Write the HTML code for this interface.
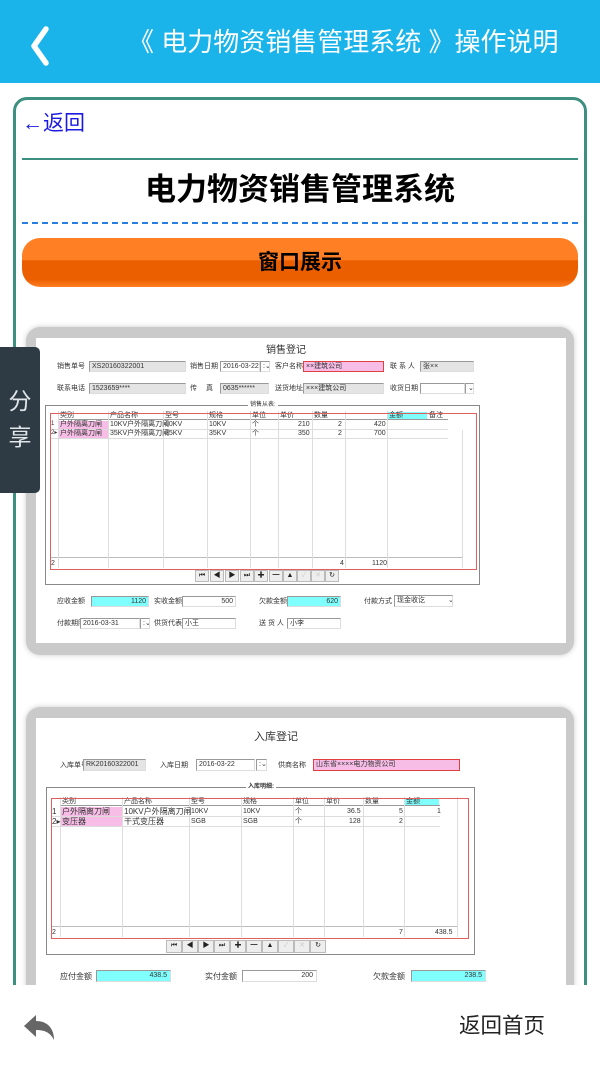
<!DOCTYPE html>
<html><head><meta charset="utf-8">
<style>
*{margin:0;padding:0;box-sizing:border-box}
body{width:600px;height:1067px;position:relative;overflow:hidden;background:#fff;font-family:"Liberation Sans","Noto Sans CJK SC",sans-serif}
.a{position:absolute}
.t{position:absolute;font-size:7px;color:#333;white-space:nowrap;line-height:9px}
.in{position:absolute;border:1px solid #999;border-right-color:#ddd;border-bottom-color:#ddd;background:#e4e4e4;font-size:7px;line-height:9px;color:#333;padding-left:2px;white-space:nowrap;overflow:hidden}
.w{background:#fff}.p{background:#f7bde6;border:1px solid #e04040}.c{background:#80ffff}
.vl{position:absolute;width:1px;background:#ddd}
.hl{position:absolute;height:1px;background:#ddd}
.rd{position:absolute;border:1px solid #e06060}
.nb{position:absolute;width:14px;height:12px;background:#eee;border:1px solid #bbb;font-size:7px;text-align:center;line-height:10px;color:#222}
</style></head><body>
<div class="a" style="left:0;top:0;width:600px;height:83px;background:#1bb4ea"></div>
<svg class="a" style="left:27px;top:25px" width="24" height="44"><path d="M19 4 L7 21 L19 38" stroke="#fff" stroke-width="5.5" fill="none" stroke-linecap="round" stroke-linejoin="round"/></svg>
<div class="a" style="left:128px;top:24px;font-size:26px;color:#fff;white-space:nowrap;line-height:36px">《 电力物资销售管理系统 》操作说明</div>

<div class="a" style="left:13px;top:97px;width:574px;height:920px;border:3px solid #3d8f80;border-radius:14px"></div>
<div class="a" style="left:22px;top:110px;font-size:21px;color:#1a1ae0;line-height:28px">←返回</div>
<div class="a" style="left:22px;top:158px;width:556px;height:2px;background:#3d8f80"></div>
<div class="a" style="left:0;top:170px;width:600px;text-align:center;font-size:31px;font-weight:bold;color:#000;line-height:40px">电力物资销售管理系统</div>
<div class="a" style="left:22px;top:222px;width:556px;border-top:2px dashed #2a7ee0"></div>
<div class="a" style="left:22px;top:238px;width:556px;height:49px;border-radius:18px;background:linear-gradient(#ff7f24 0%,#ff7f24 45%,#ec5f00 46%,#ec5f00 85%,#ff7f24 100%);text-align:center;font-size:21px;font-weight:bold;line-height:50px;color:#000">窗口展示</div>

<!-- screenshot 1 -->
<div class="a" style="left:26px;top:327px;width:548px;height:328px;background:#cacaca;border-radius:14px;box-shadow:0 0 6px #ccc"></div>
<div class="a" style="left:36px;top:338px;width:530px;height:305px;background:#fff"></div>
<div class="t" style="left:266px;top:345px;font-size:10px;line-height:12px">销售登记</div>
<div class="t" style="left:57px;top:362px">销售单号</div><div class="in" style="left:89px;top:361px;width:97px;height:11px">XS20160322001</div>
<div class="t" style="left:190px;top:362px">销售日期</div><div class="in w" style="left:220px;top:361px;width:40px;height:11px">2016-03-22</div><div class="in w" style="left:260px;top:361px;width:10px;height:11px">:⌄</div>
<div class="t" style="left:275px;top:362px">客户名称</div><div class="in p" style="left:303px;top:361px;width:81px;height:11px">××建筑公司</div>
<div class="t" style="left:390px;top:362px">联 系 人</div><div class="in" style="left:420px;top:361px;width:54px;height:11px">张××</div>
<div class="t" style="left:57px;top:384px">联系电话</div><div class="in" style="left:89px;top:383px;width:97px;height:11px">1523659****</div>
<div class="t" style="left:190px;top:384px">传　 真</div><div class="in" style="left:220px;top:383px;width:49px;height:11px">0635******</div>
<div class="t" style="left:275px;top:384px">送货地址</div><div class="in" style="left:303px;top:383px;width:81px;height:11px">×××建筑公司</div>
<div class="t" style="left:390px;top:384px">收货日期</div><div class="in w" style="left:420px;top:383px;width:45px;height:11px"></div><div class="in w" style="left:465px;top:383px;width:9px;height:11px">⌄</div>
<div class="a" style="left:45px;top:405px;width:435px;height:180px;border:1px solid #888"></div>
<div class="t" style="left:248px;top:401px;background:#fff;font-size:6px;padding:0 2px">销售从表:</div>
<div class="a" style="left:58px;top:411px;width:390px;height:9px;border-bottom:1px solid #999"></div>
<div class="a" style="left:59px;top:421px;width:49px;height:17px;background:#f7bde6"></div>
<div class="a" style="left:387px;top:412px;width:40px;height:7px;background:#80ffff"></div>
<div class="hl" style="left:50px;top:429px;width:398px"></div><div class="hl" style="left:50px;top:438px;width:398px"></div>
<div class="hl" style="left:50px;top:557px;width:412px;background:#bbb"></div>
<div class="vl" style="left:58px;top:411px;height:157px"></div>
<div class="vl" style="left:108px;top:411px;height:157px"></div>
<div class="vl" style="left:163px;top:411px;height:157px"></div>
<div class="vl" style="left:207px;top:411px;height:157px"></div>
<div class="vl" style="left:250px;top:411px;height:157px"></div>
<div class="vl" style="left:278px;top:411px;height:157px"></div>
<div class="vl" style="left:312px;top:411px;height:157px"></div>
<div class="vl" style="left:345px;top:411px;height:157px"></div>
<div class="vl" style="left:387px;top:411px;height:157px"></div>
<div class="vl" style="left:462px;top:430px;height:138px"></div>
<div class="t" style="left:60px;top:411px">类别</div><div class="t" style="left:110px;top:411px">产品名称</div><div class="t" style="left:165px;top:411px">型号</div><div class="t" style="left:209px;top:411px">规格</div><div class="t" style="left:252px;top:411px">单位</div><div class="t" style="left:280px;top:411px">单价</div><div class="t" style="left:314px;top:411px">数量</div><div class="t" style="left:389px;top:411px">金额</div><div class="t" style="left:429px;top:411px">备注</div>
<div class="t" style="left:51px;top:420px;font-size:6px">1</div><div class="t" style="left:60px;top:420px">户外隔离刀闸</div><div class="t" style="left:110px;top:420px">10KV户外隔离刀闸</div><div class="t" style="left:165px;top:420px">10KV</div><div class="t" style="left:209px;top:420px">10KV</div><div class="t" style="left:252px;top:420px">个</div><div class="t" style="left:298px;top:420px">210</div><div class="t" style="left:338px;top:420px">2</div><div class="t" style="left:374px;top:420px">420</div>
<div class="t" style="left:51px;top:429px;font-size:6px">2▸</div><div class="t" style="left:60px;top:429px">户外隔离刀闸</div><div class="t" style="left:110px;top:429px">35KV户外隔离刀闸</div><div class="t" style="left:165px;top:429px">35KV</div><div class="t" style="left:209px;top:429px">35KV</div><div class="t" style="left:252px;top:429px">个</div><div class="t" style="left:298px;top:429px">350</div><div class="t" style="left:338px;top:429px">2</div><div class="t" style="left:374px;top:429px">700</div>
<div class="t" style="left:51px;top:559px">2</div><div class="t" style="left:340px;top:559px">4</div><div class="t" style="left:372px;top:559px">1120</div>
<div class="rd" style="left:50px;top:413px;width:427px;height:157px"></div>
<div class="nb" style="left:195px;top:570px">⏮</div><div class="nb" style="left:210px;top:570px">◀</div><div class="nb" style="left:225px;top:570px">▶</div><div class="nb" style="left:240px;top:570px">⏭</div><div class="nb" style="left:254px;top:570px">✚</div><div class="nb" style="left:269px;top:570px">━</div><div class="nb" style="left:283px;top:570px">▲</div><div class="nb" style="left:297px;top:570px;color:#ccc">✓</div><div class="nb" style="left:311px;top:570px;color:#ccc">✕</div><div class="nb" style="left:325px;top:570px">↻</div>
<div class="t" style="left:57px;top:597px">应收金额</div><div class="in c" style="left:91px;top:596px;width:58px;height:11px;text-align:right;padding-right:2px">1120</div>
<div class="t" style="left:154px;top:597px">实收金额</div><div class="in w" style="left:182px;top:596px;width:54px;height:11px;text-align:right;padding-right:2px">500</div>
<div class="t" style="left:259px;top:597px">欠款金额</div><div class="in c" style="left:287px;top:596px;width:54px;height:11px;text-align:right;padding-right:2px">620</div>
<div class="t" style="left:364px;top:597px">付款方式</div><div class="in w" style="left:394px;top:595px;width:59px;height:12px">现金收讫 　　　⌄</div>
<div class="t" style="left:57px;top:619px">付款期限</div><div class="in w" style="left:80px;top:618px;width:60px;height:11px">2016-03-31</div><div class="in w" style="left:140px;top:618px;width:10px;height:11px">:⌄</div>
<div class="t" style="left:154px;top:619px">供货代表</div><div class="in w" style="left:182px;top:618px;width:54px;height:11px">小王</div>
<div class="t" style="left:259px;top:619px">送 货 人</div><div class="in w" style="left:287px;top:618px;width:54px;height:11px">小李</div>

<!-- screenshot 2 -->
<div class="a" style="left:26px;top:707px;width:548px;height:300px;background:#cacaca;border-radius:14px;box-shadow:0 0 6px #ccc"></div>
<div class="a" style="left:36px;top:718px;width:530px;height:290px;background:#fff"></div>
<div class="t" style="left:254px;top:731px;font-size:11px;line-height:13px">入库登记</div>
<div class="t" style="left:60px;top:761px">入库单号</div><div class="in" style="left:83px;top:759px;width:63px;height:12px">RK20160322001</div>
<div class="t" style="left:160px;top:761px">入库日期</div><div class="in w" style="left:196px;top:759px;width:59px;height:12px">2016-03-22</div><div class="in w" style="left:256px;top:759px;width:11px;height:12px">:⌄</div>
<div class="t" style="left:278px;top:761px">供商名称</div><div class="in p" style="left:313px;top:759px;width:147px;height:12px">山东省××××电力物资公司</div>
<div class="a" style="left:46px;top:787px;width:429px;height:168px;border:1px solid #888"></div>
<div class="t" style="left:246px;top:783px;background:#fff;font-size:6px;padding:0 2px;font-weight:bold">入库明细:</div>
<div class="a" style="left:60px;top:797px;width:380px;height:9px;border-bottom:1px solid #999"></div>
<div class="a" style="left:61px;top:807px;width:61px;height:20px;background:#f7bde6"></div>
<div class="a" style="left:405px;top:798px;width:34px;height:7px;background:#80ffff"></div>
<div class="hl" style="left:51px;top:816px;width:389px"></div><div class="hl" style="left:51px;top:826px;width:389px"></div>
<div class="hl" style="left:51px;top:926px;width:407px;background:#bbb"></div>
<div class="vl" style="left:60px;top:797px;height:140px"></div>
<div class="vl" style="left:122px;top:797px;height:140px"></div>
<div class="vl" style="left:189px;top:797px;height:140px"></div>
<div class="vl" style="left:241px;top:797px;height:140px"></div>
<div class="vl" style="left:293px;top:797px;height:140px"></div>
<div class="vl" style="left:324px;top:797px;height:140px"></div>
<div class="vl" style="left:363px;top:797px;height:140px"></div>
<div class="vl" style="left:404px;top:797px;height:140px"></div>
<div class="vl" style="left:457px;top:797px;height:140px"></div>
<div class="t" style="left:62px;top:797px">类别</div><div class="t" style="left:124px;top:797px">产品名称</div><div class="t" style="left:191px;top:797px">型号</div><div class="t" style="left:243px;top:797px">规格</div><div class="t" style="left:295px;top:797px">单位</div><div class="t" style="left:326px;top:797px">单价</div><div class="t" style="left:365px;top:797px">数量</div><div class="t" style="left:406px;top:797px">金额</div>
<div class="t" style="left:52px;top:807px;font-size:8px">1</div><div class="t" style="left:62px;top:807px;font-size:8px">户外隔离刀闸</div><div class="t" style="left:124px;top:807px;font-size:8px">10KV户外隔离刀闸</div><div class="t" style="left:191px;top:807px">10KV</div><div class="t" style="left:243px;top:807px">10KV</div><div class="t" style="left:295px;top:807px">个</div><div class="t" style="left:347px;top:807px">36.5</div><div class="t" style="left:399px;top:807px">5</div><div class="t" style="left:437px;top:807px">1</div>
<div class="t" style="left:52px;top:817px;font-size:8px">2▸</div><div class="t" style="left:62px;top:817px;font-size:8px">变压器</div><div class="t" style="left:124px;top:817px;font-size:8px">干式变压器</div><div class="t" style="left:191px;top:817px">SGB</div><div class="t" style="left:243px;top:817px">SGB</div><div class="t" style="left:295px;top:817px">个</div><div class="t" style="left:349px;top:817px">128</div><div class="t" style="left:399px;top:817px">2</div>
<div class="t" style="left:52px;top:928px">2</div><div class="t" style="left:399px;top:928px">7</div><div class="t" style="left:435px;top:928px">438.5</div>
<div class="rd" style="left:51px;top:798px;width:418px;height:141px"></div>
<div class="nb" style="left:166px;top:940px;height:13px;width:16px">⏮</div><div class="nb" style="left:182px;top:940px;height:13px;width:16px">◀</div><div class="nb" style="left:198px;top:940px;height:13px;width:16px">▶</div><div class="nb" style="left:214px;top:940px;height:13px;width:16px">⏭</div><div class="nb" style="left:230px;top:940px;height:13px;width:16px">✚</div><div class="nb" style="left:246px;top:940px;height:13px;width:16px">━</div><div class="nb" style="left:262px;top:940px;height:13px;width:16px">▲</div><div class="nb" style="left:278px;top:940px;height:13px;width:16px;color:#ccc">✓</div><div class="nb" style="left:294px;top:940px;height:13px;width:16px;color:#ccc">✕</div><div class="nb" style="left:310px;top:940px;height:13px;width:16px">↻</div>
<div class="t" style="left:60px;top:972px;font-size:8px">应付金额</div><div class="in c" style="left:96px;top:970px;width:75px;height:12px;text-align:right;padding-right:3px">438.5</div>
<div class="t" style="left:205px;top:972px;font-size:8px">实付金额</div><div class="in w" style="left:242px;top:970px;width:75px;height:12px;text-align:right;padding-right:3px">200</div>
<div class="t" style="left:373px;top:972px;font-size:8px">欠款金额</div><div class="in c" style="left:411px;top:970px;width:75px;height:12px;text-align:right;padding-right:3px">238.5</div>

<!-- share tab -->
<div class="a" style="left:0;top:347px;width:40px;height:146px;background:#2e3a44;border-radius:0 5px 5px 0;color:#e0e6ea;font-size:23px;text-align:center;line-height:36px;padding-top:36px">分<br>享</div>

<!-- footer -->
<div class="a" style="left:0;top:985px;width:600px;height:82px;background:#fff"></div>
<svg class="a" style="left:22px;top:1013px" width="34" height="28"><path d="M2 13 L14 2 L14 8 C26 8 32 16 32 27 C28 19 22 17 14 17 L14 24 Z" fill="#666"/></svg>
<div class="a" style="left:459px;top:1012px;font-size:21.5px;color:#222;line-height:28px">返回首页</div>
</body></html>
